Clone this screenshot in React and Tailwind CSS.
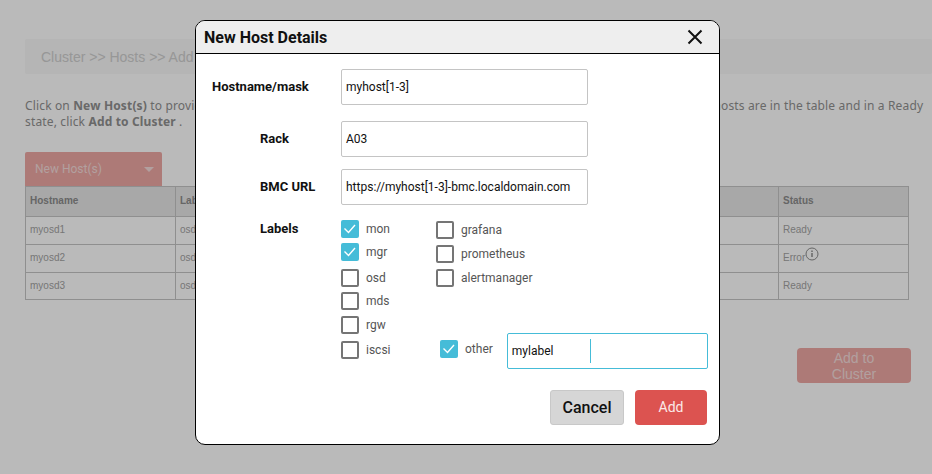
import React from 'react';

const rows = [
  { host: 'myosd1', labels: 'osd', status: 'Ready', height: 'h-[28px]' },
  { host: 'myosd2', labels: 'osd', status: 'Error', height: 'h-[28px]' },
  { host: 'myosd3', labels: 'osd', status: 'Ready', height: 'h-[27px]' },
];

const Check = ({ label, checked, className = '' }) => (
  <label className={`flex items-center gap-[7px] ${className}`}>
    {checked ? (
      <span className="flex h-[18px] w-[18px] items-center justify-center rounded-[2px] bg-[#45bcd8]">
        <svg className="h-[18px] w-[18px]" viewBox="0 0 18 18" fill="none" stroke="#fff" strokeWidth="1.4">
          <path d="M3.5 8.5 7.5 12.5 14 5" />
        </svg>
      </span>
    ) : (
      <span className="h-[18px] w-[18px] rounded-[2px] border-2 border-[#757575] bg-white"></span>
    )}
    <span className="text-[12px] leading-[18px] text-[#555]">{label}</span>
  </label>
);

const Field = ({ value }) => (
  <div className="flex h-[36px] w-[247px] items-center rounded-[2px] border border-[#c4c4c4] px-[4px] text-[12px] text-[#111]">
    {value}
  </div>
);

export default function App() {
  return (
    <div className="relative h-[474px] overflow-hidden bg-white font-['Roboto',sans-serif]">
      {/* Page behind the dialog */}
      <div className="pl-[25px] pt-[39px]">
        <div className="flex h-[35px] w-[907px] items-center rounded-[2px] bg-[#f8f8f8] pl-[16px] pt-[1px] font-['Liberation_Sans',sans-serif] text-[14px] text-[#cfcfcf]">
          Cluster &gt;&gt; Hosts &gt;&gt; Add
        </div>
        <p className="mt-[24px] whitespace-nowrap font-['Noto_Sans',sans-serif] text-[12px] leading-[16px] tracking-[0.15px] text-[#909090]">
          Click on <b>New Host(s)</b> to provide the details of the hosts you want to add to your cluster, one at a time. When all of your hosts are in the table and in a Ready
          <br />
          state, click <b>Add to Cluster</b> .
        </p>
        <button className="mt-[22px] flex h-[34px] w-[137px] items-center justify-between rounded-t-[2px] bg-[#eea8a4] pl-[10px] pr-[8px] text-[12px] text-[#f4dcdb]">
          New Host(s)
          <span className="h-0 w-0 border-x-[5px] border-t-[5px] border-x-transparent border-t-[#f4dcdb]"></span>
        </button>
        <table className="w-[884px] table-fixed border-collapse border border-[#c4c4c4] font-['Liberation_Sans',sans-serif] text-[10px] text-[#a3a3a3]">
          <thead>
            <tr className="h-[30px] bg-[#e6e6e6] text-left text-[#8c8c8c]">
              <th className="w-[150px] border border-[#c4c4c4] pb-[2px] pl-[4px]">Hostname</th>
              <th className="border border-[#c4c4c4] pb-[2px] pl-[4px]">Labels</th>
              <th className="w-[130px] border border-[#c4c4c4] pb-[2px] pl-[4px]">Status</th>
            </tr>
          </thead>
          <tbody>
            {rows.map((row) => (
              <tr key={row.host} className={row.height}>
                <td className="border border-[#c4c4c4] pb-[2px] pl-[4px]">{row.host}</td>
                <td className="border border-[#c4c4c4] pb-[2px] pl-[4px]">{row.labels}</td>
                <td className="border border-[#c4c4c4] pb-[2px] pl-[4px]">
                  <span className="flex items-center">
                    {row.status}
                    {row.status === 'Error' && (
                      <svg className="mb-[7px] h-[14px] w-[14px]" viewBox="0 0 14 14" fill="none" stroke="#8c8c8c" strokeWidth="1">
                        <circle cx="7" cy="7" r="6" />
                        <path d="M7 6v4" strokeWidth="1.5" />
                        <path d="M7 3.5v1.5" strokeWidth="1.5" />
                      </svg>
                    )}
                  </span>
                </td>
              </tr>
            ))}
          </tbody>
        </table>
        <div className="mt-[48px] flex w-[886px] justify-end">
          <button className="h-[35px] w-[114px] rounded-[4px] bg-[#eea8a4] px-[24px] font-['Liberation_Sans',sans-serif] text-[14px] leading-[16px] text-[#f4dcdb]">
            Add to Cluster
          </button>
        </div>
      </div>

      {/* Overlay */}
      <div className="absolute inset-0 bg-black/[0.27]"></div>

      {/* Dialog */}
      <div className="absolute left-[195px] top-[20px] h-[425px] w-[525px] overflow-hidden rounded-[10px] border border-black bg-white">
        <div className="flex h-[33px] items-center justify-between border-b border-black bg-[#eeeeee] pl-[8px] pr-[16px]">
          <h2 className="pt-[1px] text-[16px] font-bold text-[#111]">New Host Details</h2>
          <svg className="h-[16px] w-[16px]" viewBox="0 0 16 16" fill="none" stroke="#111" strokeWidth="2">
            <path d="M1.5 1.5 14.5 14.5M14.5 1.5 1.5 14.5" />
          </svg>
        </div>
        <div className="pt-[15px]">
          <div className="flex items-center">
            <span className="w-[145px] pl-[16px] text-[13px] font-bold text-[#111]">Hostname/mask</span>
            <Field value="myhost[1-3]" />
          </div>
          <div className="mt-[16px] flex items-center">
            <span className="w-[145px] pl-[64px] text-[13px] font-bold text-[#111]">Rack</span>
            <Field value="A03" />
          </div>
          <div className="mt-[12px] flex items-center">
            <span className="w-[145px] pl-[64px] text-[13px] font-bold text-[#111]">BMC URL</span>
            <Field value="https://myhost[1-3]-bmc.localdomain.com" />
          </div>
          <div className="mt-[15px] flex">
            <span className="w-[145px] pl-[64px] text-[13px] font-bold leading-[18px] text-[#111]">Labels</span>
            <div className="flex w-[95px] flex-col">
              <Check label="mon" checked />
              <Check label="mgr" checked className="mt-[5px]" />
              <Check label="osd" className="mt-[8px]" />
              <Check label="mds" className="mt-[5px]" />
              <Check label="rgw" className="mt-[6px]" />
              <Check label="iscsi" className="mt-[7px]" />
            </div>
            <div className="flex flex-col">
              <Check label="grafana" className="mt-[1px]" />
              <Check label="prometheus" className="mt-[6px]" />
              <Check label="alertmanager" className="mt-[6px]" />
              <div className="mt-[46px] flex items-center">
                <Check label="other" checked className="mb-[4px] ml-[4px]" />
                <div className="ml-[14px] flex h-[36px] w-[201px] items-center rounded-[2px] border border-[#45bcd8] pl-[4px] text-[12px] text-[#111]">
                  <span className="w-[78px]">mylabel</span>
                  <span className="h-[24px] w-px bg-[#45bcd8]"></span>
                </div>
              </div>
            </div>
          </div>
          <div className="mt-[21px] flex justify-end gap-[11px] pr-[12px]">
            <button className="h-[35px] w-[74px] rounded-[3px] border border-[#c8c8c8] bg-[#d6d6d6] text-[16px] font-medium text-[#111]">
              Cancel
            </button>
            <button className="h-[35px] w-[72px] rounded-[4px] bg-[#dc5350] text-[14px] text-[#fbe9e8]">Add</button>
          </div>
        </div>
      </div>
    </div>
  );
}
